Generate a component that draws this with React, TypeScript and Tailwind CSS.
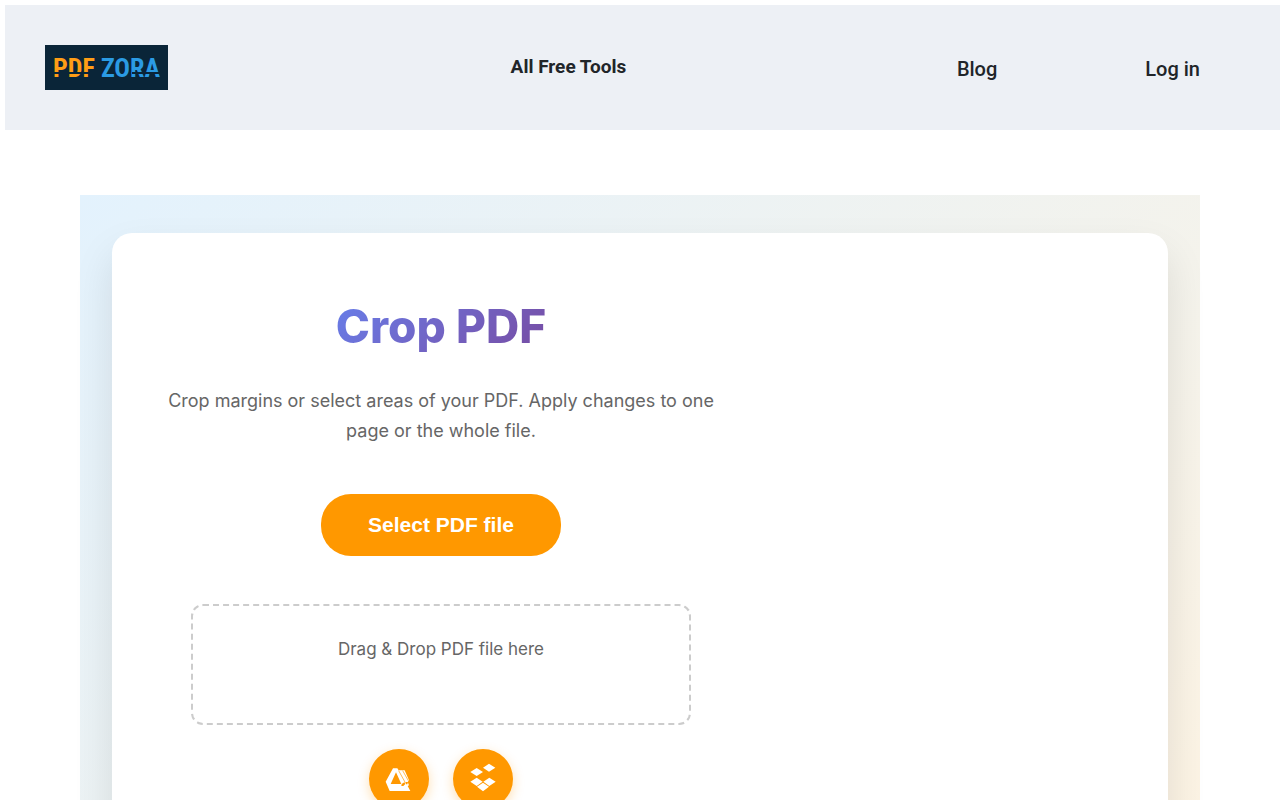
import type { ReactNode } from 'react';

function Logo() {
  return (
    <a
      href="#home"
      className="relative flex h-[45px] w-[123px] shrink-0 items-center justify-center gap-1.5 bg-[#0a2538] font-['Roboto_Condensed',Roboto,sans-serif] text-[26px] leading-none font-bold"
    >
      <span className="text-[#ff9d16]">PDF</span>
      <span className="text-[#2b9be4]">ZORA</span>
      <span className="absolute bottom-4 left-1 h-0.5 w-11 bg-[#0a2538]" />
      <span className="absolute right-1 bottom-4 h-0.5 w-8 bg-[#0a2538]" />
    </a>
  );
}

function Header() {
  return (
    <header className="flex h-[125px] items-center bg-[#edf0f5] pr-20 pl-10 font-[Roboto,sans-serif] text-xl font-medium text-[#212529]">
      <Logo />
      <div className="flex-1 pl-3 text-center text-[19px] font-bold">
        <a href="#tools">All Free Tools</a>
      </div>
      <nav className="flex gap-[148px] pt-0.5">
        <a href="#blog">Blog</a>
        <a href="#login">Log in</a>
      </nav>
    </header>
  );
}

function SourceButton({ label, children }: { label: string; children: ReactNode }) {
  return (
    <button
      type="button"
      aria-label={label}
      className="size-[60px] rounded-full bg-[#ff9800] text-white shadow-[0_4px_12px_rgba(255,152,0,0.3)]"
    >
      {children}
    </button>
  );
}

function DriveIcon() {
  return (
    <svg viewBox="27 27 180 180" className="size-full" fill="currentColor">
      <path
        fillRule="evenodd"
        d="M99 85H112L116 91H134L147 121L143 126L147 136L143 138L151 153H89L77 125ZM108 97L92 132H124Z"
      />
      <path d="M116 92L137 130M128 92L145 122" fill="none" stroke="#ff9800" strokeWidth="2" />
      <path d="M125 132L133 127L136 132L130 138H124ZM137 126H144L142 133H138Z" fill="#ff9800" />
    </svg>
  );
}

function DropboxIcon() {
  return (
    <svg viewBox="279 27 180 180" className="size-full" fill="currentColor">
      <path d="M350 84L369 96L350 108L331 96ZM387 71L406 83L387 95L369 83ZM350 113L368 125L350 138L331 125ZM388 113L407 125L388 138L370 125ZM369 128L387 140L369 154L351 140Z" />
    </svg>
  );
}

function CropTool() {
  return (
    <div className="flex flex-1 flex-col items-center text-center">
      <h1 className="bg-linear-135 from-[#667eea] to-[#764ba2] bg-clip-text text-[46px] leading-[58px] font-extrabold text-transparent">
        Crop PDF
      </h1>
      <p className="mt-[31px] text-lg leading-[30px] text-[#666666]">
        Crop margins or select areas of your PDF. Apply changes to one page or the whole file.
      </p>
      <button
        type="button"
        className="mt-12 h-[62px] w-60 rounded-[30px] bg-[#ff9800] font-['Liberation_Sans',sans-serif] text-[21px] font-bold text-white"
      >
        Select PDF file
      </button>
      <div className="mt-12 h-[121px] w-full max-w-[500px] rounded-xl border-2 border-dashed border-[#cccccc] pt-7 text-[17px] leading-[30px] text-[#666666]">
        Drag &amp; Drop PDF file here
      </div>
      <div className="mt-6 flex gap-6">
        <SourceButton label="Google Drive">
          <DriveIcon />
        </SourceButton>
        <SourceButton label="Dropbox">
          <DropboxIcon />
        </SourceButton>
      </div>
    </div>
  );
}

export default function App() {
  return (
    <div className="bg-white pt-[5px] font-[Inter,sans-serif]">
      <div className="pl-[5px]">
        <Header />
      </div>
      <main className="mx-20 mt-[65px] bg-linear-135 from-[#e3f2fd] to-[#fff3e0] px-8 pt-[38px] pb-32">
        <section className="flex gap-12 rounded-[20px] bg-white px-12 pt-16 pb-24 shadow-[0_20px_40px_rgba(0,0,0,0.1)]">
          <CropTool />
          <div className="w-[350px] shrink-0" />
        </section>
      </main>
    </div>
  );
}
